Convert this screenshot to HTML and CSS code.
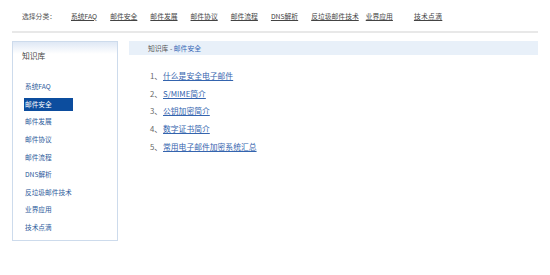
FILE: index.html
```html
<!DOCTYPE html>
<html lang="zh-CN">
<head>
<meta charset="utf-8">
<title>知识库 - 邮件安全</title>
<link rel="stylesheet" href="styles.css">
</head>
<body>
<div class="topnav">
  <span class="nav-label">选择分类：</span>
  <a class="nav-link" href="#">系统FAQ</a>
  <a class="nav-link" href="#">邮件安全</a>
  <a class="nav-link" href="#">邮件发展</a>
  <a class="nav-link" href="#">邮件协议</a>
  <a class="nav-link" href="#">邮件流程</a>
  <a class="nav-link" href="#">DNS解析</a>
  <a class="nav-link" href="#">反垃圾邮件技术</a>
  <a class="nav-link nav-tight" href="#">业界应用</a>
  <a class="nav-link nav-wide" href="#">技术点滴</a>
</div>
<div class="main">
  <div class="sidebar">
    <div class="side-title">知识库</div>
    <ul class="side-list">
      <li class="side-item"><a class="side-link" href="#">系统FAQ</a></li>
      <li class="side-item"><a class="side-link active" href="#">邮件安全</a></li>
      <li class="side-item"><a class="side-link" href="#">邮件发展</a></li>
      <li class="side-item"><a class="side-link" href="#">邮件协议</a></li>
      <li class="side-item"><a class="side-link" href="#">邮件流程</a></li>
      <li class="side-item"><a class="side-link" href="#">DNS解析</a></li>
      <li class="side-item"><a class="side-link" href="#">反垃圾邮件技术</a></li>
      <li class="side-item"><a class="side-link" href="#">业界应用</a></li>
      <li class="side-item"><a class="side-link" href="#">技术点滴</a></li>
    </ul>
  </div>
  <div class="content">
    <div class="crumb">知识库 - <a class="crumb-link" href="#">邮件安全</a></div>
    <ol class="articles">
      <li class="article"><span class="num">1、</span><a class="art-link" href="#">什么是安全电子邮件</a></li>
      <li class="article"><span class="num">2、</span><a class="art-link" href="#">S/MIME简介</a></li>
      <li class="article"><span class="num">3、</span><a class="art-link" href="#">公钥加密简介</a></li>
      <li class="article"><span class="num">4、</span><a class="art-link" href="#">数字证书简介</a></li>
      <li class="article"><span class="num">5、</span><a class="art-link" href="#">常用电子邮件加密系统汇总</a></li>
    </ol>
  </div>
</div>
</body>
</html>
```
FILE: styles.css
```css
html, body {
  margin: 0;
  padding: 0;
  background: #ffffff;
}
body {
  font-family: "Noto Sans CJK SC", "DejaVu Sans", sans-serif;
  color: #555;
}
a { text-decoration: underline; }

.topnav {
  display: flex;
  align-items: center;
  height: 31px;
  margin: 0 12px 0 12px;
  padding-left: 10px;
  border-bottom: 2px solid #e8e8e8;
  font-size: 6.8px;
  line-height: 10px;
}
.nav-label {
  color: #555;
  margin-right: 15px;
}
.nav-link {
  color: #444;
  margin-right: 13px;
}
.nav-tight { margin-left: -6px; margin-right: 21px; }
.nav-wide { letter-spacing: 0.3px; }

.main {
  display: flex;
  gap: 11px;
  padding: 8px 12px 0 12px;
}

.sidebar {
  box-sizing: border-box;
  width: 106px;
  height: 200px;
  border: 1px solid #cddbec;
  background: linear-gradient(#dfe8f5 0px, #ffffff 12px);
}
.side-title {
  padding: 9px 0 0 9px;
  line-height: 10px;
  font-size: 7.8px;
  color: #444;
}
.side-list {
  list-style: none;
  margin: 17px 0 0 0;
  padding: 0 0 0 11px;
}
.side-item {
  height: 17.6px;
  display: flex;
  align-items: center;
}
.side-link {
  display: inline-block;
  width: 49px;
  height: 13px;
  line-height: 13px;
  padding-left: 1px;
  box-sizing: border-box;
  font-size: 6.7px;
  color: #2c5a9a;
  text-decoration: none;
  white-space: nowrap;
}
.side-link.active {
  background: #0c4d9e;
  color: #ffffff;
}

.content {
  flex: 1;
}
.crumb {
  height: 14px;
  line-height: 14px;
  padding-left: 19px;
  background: #e8f0f9;
  font-size: 6.8px;
  color: #555;
}
.crumb-link {
  color: #3566b5;
  text-decoration: none;
}
.articles {
  list-style: none;
  margin: 12px 0 0 0;
  padding: 0 0 0 21px;
}
.article {
  height: 17.6px;
  display: flex;
  align-items: center;
  font-size: 7.8px;
}
.num {
  width: 13px;
  color: #666;
}
.art-link {
  color: #3464ae;
}
```
